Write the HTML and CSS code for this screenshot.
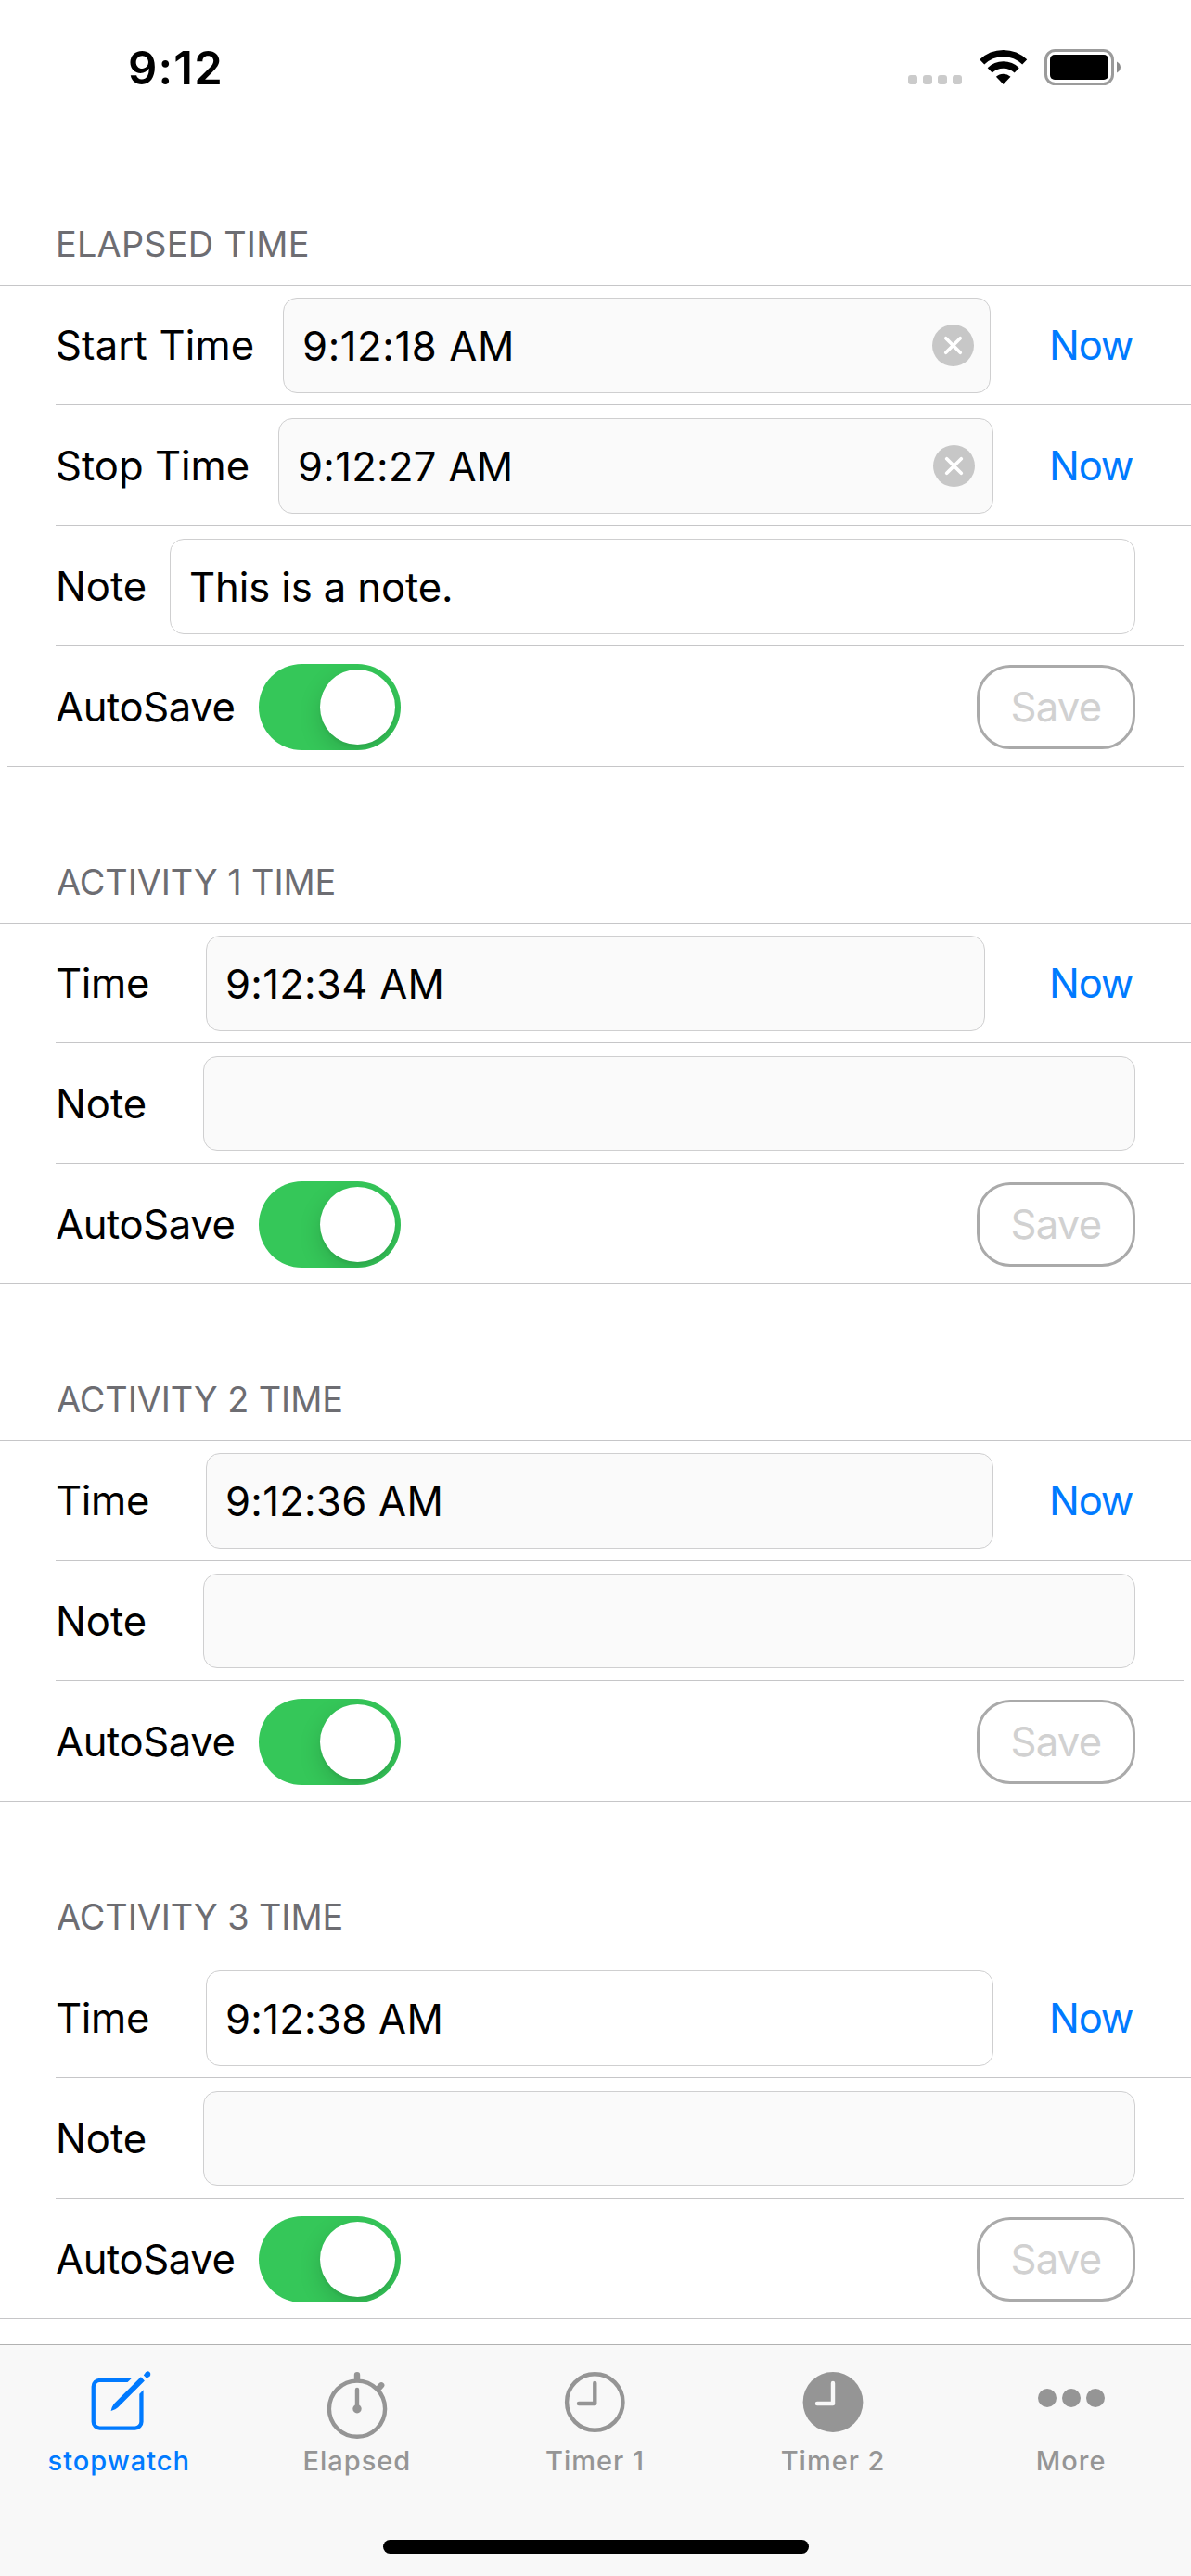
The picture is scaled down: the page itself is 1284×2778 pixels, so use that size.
FILE: index.html
```html
<!DOCTYPE html>
<html lang="en">
<head>
  <meta charset="UTF-8" />
  <meta name="viewport" content="width=device-width, initial-scale=1.0"/>
  <title>Stopwatch</title>
  <link rel="stylesheet" href="styles.css">
</head>
<body>
  <div class="screen">
    <!-- Status bar -->
    <header class="status-bar">
      <span class="clock">9:12</span>
      <div class="status-icons">
        <svg class="signal" viewBox="0 0 58 10">
          <rect x="0" width="10" height="10" rx="3"/>
          <rect x="16" width="10" height="10" rx="3"/>
          <rect x="32" width="10" height="10" rx="3"/>
          <rect x="48" width="10" height="10" rx="3"/>
        </svg>
        <svg class="wifi" viewBox="0 0 52 38">
          <path class="band" d="M2.7 12.9A33.3 33.3 0 0 1 48.7 12.9"/>
          <path class="band" d="M11.2 21.8A21 21 0 0 1 40.2 21.8"/>
          <path d="M25.7 37L17.9 28.8A11.3 11.3 0 0 1 33.5 28.8Z"/>
        </svg>
        <svg class="battery" viewBox="0 0 82 39">
          <rect class="shell" x="1.5" y="1.5" width="72" height="36" rx="10"/>
          <rect x="6" y="6" width="63" height="27" rx="5"/>
          <path class="cap" d="M78 13.5C83.3 16 83.3 23 78 25.5Z"/>
        </svg>
      </div>
    </header>

    <main>
      <!-- Elapsed time -->
      <section>
        <h2 class="elapsed">ELAPSED TIME</h2>
        <div class="row first">
          <label class="w-start" for="startTime">Start Time</label>
          <div class="field gap-start">
            <input type="text" id="startTime" value="9:12:18 AM" />
            <svg class="clear" viewBox="0 0 45 45"><circle cx="22.5" cy="22.5" r="22.5"/><path d="M14.7 14.7L30.3 30.3M30.3 14.7L14.7 30.3"/></svg>
          </div>
          <button class="now">Now</button>
        </div>
        <div class="row">
          <label class="w-stop" for="stopTime">Stop Time</label>
          <div class="field gap-stop">
            <input type="text" id="stopTime" value="9:12:27 AM" />
            <svg class="clear" viewBox="0 0 45 45"><circle cx="22.5" cy="22.5" r="22.5"/><path d="M14.7 14.7L30.3 30.3M30.3 14.7L14.7 30.3"/></svg>
          </div>
          <button class="now">Now</button>
        </div>
        <div class="row short">
          <label class="w-note" for="note">Note</label>
          <div class="field white"><input type="text" id="note" value="This is a note." /></div>
        </div>
        <div class="row last inset">
          <span class="label w-auto">AutoSave</span>
          <span class="switch"><span class="knob"></span></span>
          <button class="save" disabled>Save</button>
        </div>
      </section>

      <!-- Activity 1 -->
      <section>
        <h2>ACTIVITY 1 TIME</h2>
        <div class="row first">
          <label class="w-time" for="time1">Time</label>
          <div class="field gap-wide"><input type="text" id="time1" value="9:12:34 AM" /></div>
          <button class="now">Now</button>
        </div>
        <div class="row short">
          <label class="w-activity" for="note1">Note</label>
          <div class="field note"><input type="text" id="note1" /></div>
        </div>
        <div class="row last">
          <span class="label w-auto">AutoSave</span>
          <span class="switch"><span class="knob"></span></span>
          <button class="save" disabled>Save</button>
        </div>
      </section>

      <!-- Activity 2 -->
      <section>
        <h2>ACTIVITY 2 TIME</h2>
        <div class="row first">
          <label class="w-time" for="time2">Time</label>
          <div class="field gap-stop"><input type="text" id="time2" value="9:12:36 AM" /></div>
          <button class="now">Now</button>
        </div>
        <div class="row short">
          <label class="w-activity" for="note2">Note</label>
          <div class="field note"><input type="text" id="note2" /></div>
        </div>
        <div class="row last">
          <span class="label w-auto">AutoSave</span>
          <span class="switch"><span class="knob"></span></span>
          <button class="save" disabled>Save</button>
        </div>
      </section>

      <!-- Activity 3 -->
      <section>
        <h2>ACTIVITY 3 TIME</h2>
        <div class="row first">
          <label class="w-time" for="time3">Time</label>
          <div class="field white gap-stop"><input type="text" id="time3" value="9:12:38 AM" /></div>
          <button class="now">Now</button>
        </div>
        <div class="row short">
          <label class="w-activity" for="note3">Note</label>
          <div class="field note"><input type="text" id="note3" /></div>
        </div>
        <div class="row last">
          <span class="label w-auto">AutoSave</span>
          <span class="switch"><span class="knob"></span></span>
          <button class="save" disabled>Save</button>
        </div>
      </section>
    </main>

    <!-- Tab bar -->
    <footer>
      <nav class="tabs">
        <a class="tab active">
          <svg viewBox="-4.6 0 70 70">
            <path d="M44.3 7.7H10a9 9 0 0 0-9 9V54.7a9 9 0 0 0 9 9H48a9 9 0 0 0 9-9V20.3L52.7 24.7V54.7a4.7 4.7 0 0 1-4.7 4.7H10a4.7 4.7 0 0 1-4.7-4.7V16.7a4.7 4.7 0 0 1 4.7-4.7H40Z"/>
            <path d="M54.3 6.3L58.3 10.5L29.5 39.2Q27.5 41.2 22 43Q22.8 38.5 25.3 35.2Z"/>
            <path d="M57.2 4.4L58.7 2.4A3.1 3.1 0 1 1 62.6 6.4L60.6 7.8Z"/>
          </svg>
          <span>stopwatch</span>
        </a>
        <a class="tab">
          <svg viewBox="0 0 70 70">
            <circle class="line" cx="35" cy="40.7" r="30.1"/>
            <path class="line knob-line" d="M35 4.3V9M58 18.7L61.2 15.3"/>
            <path class="line" d="M35 20V40"/>
            <circle cx="35" cy="40.7" r="4.7"/>
          </svg>
          <span>Elapsed</span>
        </a>
        <a class="tab">
          <svg viewBox="0 0 70 70">
            <circle class="line" cx="35.3" cy="33.5" r="30.2"/>
            <path class="line" d="M35.3 13V35H18"/>
          </svg>
          <span>Timer 1</span>
        </a>
        <a class="tab">
          <svg viewBox="0 0 70 70">
            <circle cx="35" cy="33.5" r="32.4"/>
            <path class="line light" d="M35 13V35H18"/>
          </svg>
          <span>Timer 2</span>
        </a>
        <a class="tab">
          <svg class="dots" viewBox="0 0 74 70">
            <circle cx="11" cy="29" r="10"/>
            <circle cx="37" cy="29" r="10"/>
            <circle cx="63" cy="29" r="10"/>
          </svg>
          <span>More</span>
        </a>
      </nav>
      <div class="home-indicator"></div>
    </footer>
  </div>
</body>
</html>
```
FILE: styles.css
```css
* {
  box-sizing: border-box;
  margin: 0;
  padding: 0;
}
body {
  background-color: #fff;
  color: #000;
  font-family: Inter, "Liberation Sans", sans-serif;
  font-size: 43.6px;
}
.screen {
  display: flex;
  flex-direction: column;
  width: 1284px;
  height: 2778px;
  overflow: hidden;
}

/* Status bar */
.status-bar {
  display: flex;
  justify-content: space-between;
  height: 139px;
  padding: 43px 76px 0 138px;
}
.clock {
  height: 60px;
  line-height: 62px;
  font-size: 49px;
  font-weight: 600;
  letter-spacing: 1.2px;
}
.status-icons {
  display: flex;
  align-items: flex-end;
  height: 49px;
}
.signal {
  width: 58px;
  height: 10px;
  margin: 0 19px 1px 0;
  fill: #cbcbcb;
}
.wifi {
  width: 52px;
  height: 38px;
  margin-right: 18px;
}
.wifi .band {
  fill: none;
  stroke: #000;
  stroke-width: 7.3;
}
.battery {
  width: 82px;
  height: 39px;
}
.battery .shell {
  fill: none;
  stroke: #9b9b9b;
  stroke-width: 3;
}
.battery .cap {
  fill: #8c8c8c;
}

/* Form sections */
main {
  flex: 1;
}
h2 {
  height: 168px;
  padding: 100px 60px 20px 61px;
  line-height: 48px;
  font-size: 37.8px;
  font-weight: 400;
  letter-spacing: -0.05px;
  color: #6d6d72;
}
h2.elapsed {
  padding-left: 60px;
  letter-spacing: 0.25px;
}
.row {
  display: flex;
  align-items: center;
  height: 130px;
  margin-left: 60px;
  padding: 14px 60px 12px 0;
  border-bottom: 1px solid #c6c6c8;
}
.row.first {
  position: relative;
}
/* full width line above the first row */
.row.first::before {
  content: "";
  position: absolute;
  top: 0;
  left: -60px;
  right: 0;
  height: 1px;
  background-color: #c6c6c8;
}
.row.short {
  margin-right: 8px;
  padding-right: 52px;
}
.row.last {
  margin-left: 0;
  padding-left: 60px;
}
.row.inset {
  margin: 0 8px;
  padding-left: 52px;
  padding-right: 52px;
}
label,
.label {
  flex: none;
  line-height: 103px;
}
.w-start {
  width: 245px;
  letter-spacing: 0.15px;
}
.w-stop {
  width: 240px;
}
.w-note {
  width: 123px;
}
.w-time {
  width: 162px;
  letter-spacing: -0.3px;
}
.w-activity {
  width: 159px;
}
.w-auto {
  width: 219px;
  letter-spacing: -0.4px;
}
.field {
  display: flex;
  align-items: center;
  flex: 1;
  height: 103px;
  padding: 0 17px 0 20px;
  border: 1px solid #cfcfd0;
  border-radius: 15px;
  background-color: #fafafa;
}
.field.white {
  background-color: #fff;
}
.field.note {
  height: 102px;
  margin-bottom: 1px;
}
.gap-start {
  margin-right: 64px;
}
.gap-stop {
  margin-right: 61px;
  padding-right: 19px;
}
.gap-wide {
  margin-right: 70px;
}
input {
  flex: 1;
  min-width: 0;
  height: 100%;
  padding-top: 1px;
  border: none;
  outline: none;
  background: none;
  font: inherit;
  letter-spacing: 0.3px;
  color: #000;
}
#startTime {
  letter-spacing: 0.6px;
}
#note {
  letter-spacing: -0.1px;
}
.clear {
  flex: none;
  width: 45px;
  height: 45px;
  fill: #c7c7c7;
}
.clear path {
  stroke: #fff;
  stroke-width: 3.6;
  stroke-linecap: round;
}
button {
  border: none;
  background: none;
  font: inherit;
  cursor: pointer;
}
.now {
  flex: none;
  width: 92px;
  line-height: 103px;
  text-align: left;
  text-indent: -1px;
  letter-spacing: -1.2px;
  color: #007aff;
}
.save {
  width: 171px;
  height: 91px;
  margin-left: auto;
  border: 3px solid #aaa;
  border-radius: 36px;
  letter-spacing: -0.7px;
  color: #d1d1d1;
}
.switch {
  flex: none;
  width: 153px;
  height: 93px;
  padding: 6px;
  border-radius: 47px;
  background-color: #35c759;
  overflow: hidden;
}
.knob {
  display: block;
  width: 81px;
  height: 81px;
  margin-left: auto;
  border-radius: 50%;
  background-color: #fff;
  box-shadow: 0 9px 24px rgba(0, 0, 0, 0.15), 0 3px 3px rgba(0, 0, 0, 0.05);
}

/* Tab bar */
footer {
  height: 250px;
  border-top: 1px solid #b2b2b2;
  background-color: #f8f8f8;
}
.tabs {
  display: flex;
  height: 210px;
  padding: 28px 1px 0 0;
}
.tab {
  display: flex;
  flex: 1;
  flex-direction: column;
  align-items: center;
  gap: 9px;
  line-height: 36px;
  font-size: 29px;
  font-weight: 500;
  letter-spacing: 1px;
  color: #959595;
}
.tab.active {
  color: #007aff;
}
.tab svg {
  width: 70px;
  height: 70px;
  overflow: visible;
  fill: currentColor;
}
.tab svg.dots {
  width: 74px;
}
.tab .line {
  fill: none;
  stroke: currentColor;
  stroke-width: 4.4;
  stroke-linecap: round;
  stroke-linejoin: round;
}
.tab .knob-line {
  stroke-width: 6.4;
}
.tab .light {
  stroke: #f8f8f8;
}
.home-indicator {
  width: 459px;
  height: 15px;
  margin: 0 auto;
  border-radius: 8px;
  background-color: #000;
}
```
